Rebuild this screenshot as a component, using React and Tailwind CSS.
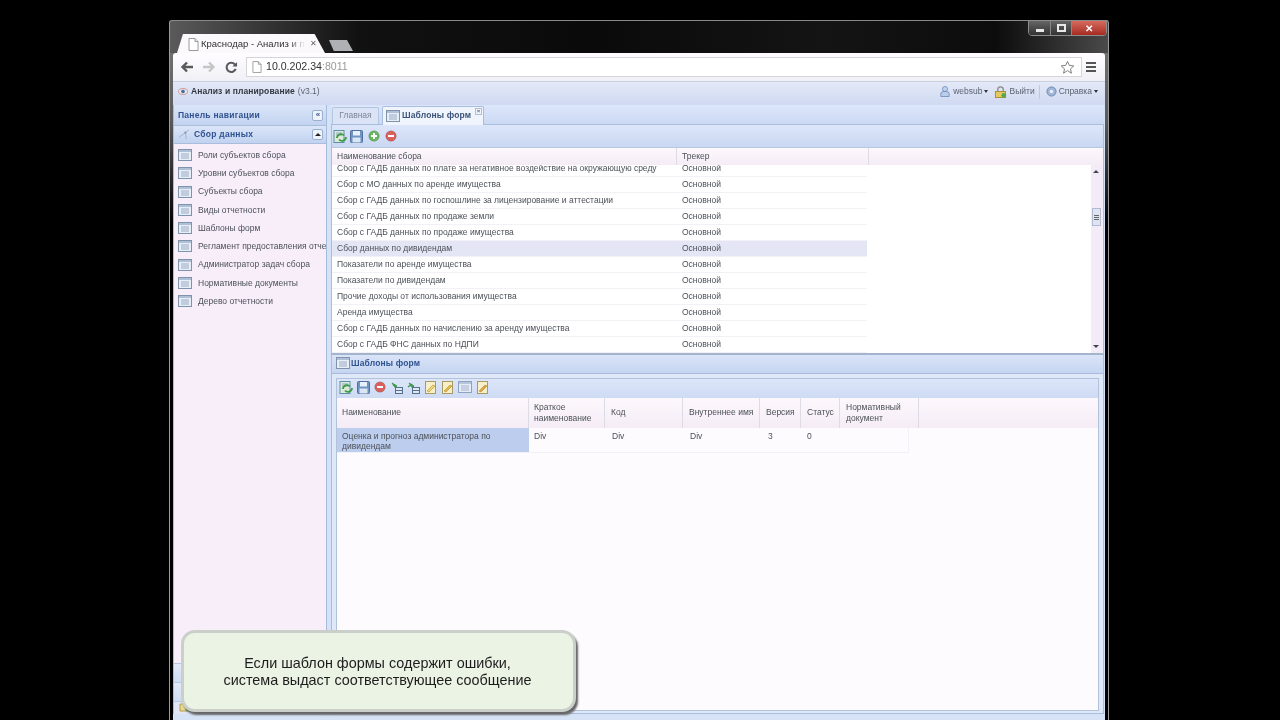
import React from "react";

const Grid = ({ className = "" }) => (
  <svg viewBox="0 0 14 12" className={"w-[14px] h-[12px] shrink-0 " + className}>
    <rect x="0.5" y="0.5" width="13" height="11" fill="#e8eef8" stroke="#7f93ad" />
    <rect x="1" y="1" width="12" height="2" fill="#aebfd6" />
    <path d="M3 5h8M3 7h8M3 9h8" stroke="#9aabc0" strokeWidth="1" />
  </svg>
);
const PageIcon = ({ cls = "w-[11px] h-[13px]" }) => (
  <svg viewBox="0 0 11 13" className={cls + " shrink-0"}>
    <path d="M1 .5h6l3 3v9H1z" fill="#fff" stroke="#9a9a9a" />
    <path d="M7 .5v3h3" fill="#e6e6e6" stroke="#9a9a9a" />
  </svg>
);
const Refresh = () => (
  <svg viewBox="0 0 14 14" className="w-[14px] h-[14px] shrink-0">
    <rect x="1" y="1.5" width="10" height="12" fill="#dcebd8" stroke="#5f8fa8" />
    <path d="M3 4h6M3 6h6" stroke="#8aa5b8" />
    <path d="M13 8a4 4 0 0 1-7 2.5M4 9a4 4 0 0 1 7-2.5" fill="none" stroke="#3f9a45" strokeWidth="1.8" />
  </svg>
);
const Save = () => (
  <svg viewBox="0 0 13 13" className="w-[13px] h-[13px] shrink-0">
    <rect x=".5" y=".5" width="12" height="12" rx="1" fill="#6f94c4" stroke="#4f70a0" />
    <rect x="3" y="1" width="7" height="4.5" fill="#e8f0fa" />
    <rect x="2.5" y="7.5" width="8" height="5" fill="#dbe6f4" />
  </svg>
);
const Dot = ({ c, plus }) => (
  <svg viewBox="0 0 12 12" className="w-[12px] h-[12px] shrink-0">
    <circle cx="6" cy="6" r="5.3" fill={c} stroke="#00000022" />
    <path d={plus ? "M3 6h6M6 3v6" : "M3 6h6"} stroke="#fff" strokeWidth="2" />
  </svg>
);
const TreeAdd = ({ flip }) => (
  <svg viewBox="0 0 13 13" className="w-[13px] h-[13px] shrink-0">
    <path d="M2 2l5 3-2 1.5z" fill="#3f9a45" stroke="#3f9a45" />
    {flip && <path d="M1 6l4-3" stroke="#3f9a45" strokeWidth="1.5" />}
    <rect x="5.5" y="6.5" width="7" height="6" fill="#dfe8f2" stroke="#55708c" />
    <path d="M5.5 9.5h7" stroke="#55708c" />
  </svg>
);
const Doc = ({ c = "#f0d878" }) => (
  <svg viewBox="0 0 13 13" className="w-[13px] h-[13px] shrink-0">
    <rect x="1.5" y=".5" width="10" height="12" fill="#f7efc9" stroke="#a79a62" />
    <path d="M3 10l6-6 2 1-6 6z" fill={c} stroke="#b98f2a" strokeWidth=".6" />
  </svg>
);
const Caret = () => <span className="inline-block ml-[2px] border-x-[2.5px] border-x-transparent border-t-[3px] border-t-[#333] align-middle" />;

const navItems = ["Роли субъектов сбора", "Уровни субъектов сбора", "Субъекты сбора", "Виды отчетности", "Шаблоны форм", "Регламент предоставления отче", "Администратор задач сбора", "Нормативные документы", "Дерево отчетности"];
const rows = ["Сбор с ГАДБ данных по плате за негативное воздействие на окружающую среду", "Сбор с МО данных по аренде имущества", "Сбор с ГАДБ данных по госпошлине за лицензирование и аттестации", "Сбор с ГАДБ данных по продаже земли", "Сбор с ГАДБ данных по продаже имущества", "Сбор данных по дивидендам", "Показатели по аренде имущества", "Показатели по дивидендам", "Прочие доходы от использования имущества", "Аренда имущества", "Сбор с ГАДБ данных по начислению за аренду имущества", "Сбор с ГАДБ ФНС данных по НДПИ"];

const hdr = "bg-gradient-to-b from-[#fdf8fd] to-[#f5ecf6] border-r border-[#dcdbe6] flex items-center leading-[11px] shrink-0";

export default function App() {
  return (
    <div className="relative w-[1280px] h-[720px] bg-black overflow-hidden font-['Liberation_Sans',sans-serif] text-[8.5px] text-[#4c5158] blur-[0.35px]">
      <div className="ml-[169px] mt-[20px] w-[940px] h-[700px] flex flex-col rounded-t-[3px] border-r border-l border-[#9a9a9a] bg-[linear-gradient(to_bottom,#7a7a7a_0px,#5a5a5a_100px,#000_206px)]">
        {/* tab strip */}
        <div className="h-[33px] flex items-end pl-[7px] shrink-0 relative bg-[linear-gradient(to_right,#5a5a5a_0%,#111_20%,#0a0a0a_45%,#141414_70%,#0c0c0c_88%,#4a4a4a_100%)] border-t border-[#8a8a8a] rounded-t-[3px]">
          <div className="w-[148px] h-[19px] pt-[1px] bg-[#fbf9fc] flex items-center pl-[11px] text-[9.5px] text-[#333] [clip-path:polygon(0_100%,4%_0,93%_0,100%_100%)]">
            <PageIcon />
            <span className="ml-[2px] w-[104px] shrink-0 overflow-hidden whitespace-nowrap [mask-image:linear-gradient(to_right,black_85%,transparent)]">Краснодар - Анализ и планирование</span>
            <span className="ml-[5px] text-[#666] text-[8px]">✕</span>
          </div>
          <div className="ml-[4px] mb-[2px] w-[24px] h-[11px] bg-[#aeb0b3] [clip-path:polygon(0_0,75%_0,100%_100%,20%_100%)]" />
          <div className="absolute right-[1px] top-[-1px] h-[16px] flex border border-[#8d8d8d] rounded-b-[4px] overflow-hidden">
            <div className="w-[22px] bg-gradient-to-b from-[#666] to-[#333] border-r border-[#888] flex items-center justify-center"><div className="w-[8px] h-[3px] mt-[4px] bg-[#e8e8e8]" /></div>
            <div className="w-[21px] bg-gradient-to-b from-[#666] to-[#333] border-r border-[#888] flex items-center justify-center"><div className="w-[9px] h-[8px] border-2 border-[#e8e8e8]" /></div>
            <div className="w-[34px] bg-gradient-to-b from-[#d66a5e] to-[#a52a22] flex items-center justify-center text-white font-bold text-[10px]">✕</div>
          </div>
        </div>
        {/* url bar */}
        <div className="h-[28px] mx-[3px] flex items-center bg-gradient-to-b from-[#fffdff] to-[#f0f0f6] rounded-t-[3px] shrink-0 pl-[7px]">
          <svg viewBox="0 0 14 12" className="w-[14px] h-[12px] shrink-0"><path d="M13 6H3M7 1.5L2.5 6 7 10.5" fill="none" stroke="#5a5a5a" strokeWidth="2.4" /></svg>
          <svg viewBox="0 0 14 12" className="w-[14px] h-[12px] ml-[8px] shrink-0"><path d="M1 6h10M7 1.5L11.5 6 7 10.5" fill="none" stroke="#c6c6c6" strokeWidth="2.4" /></svg>
          <svg viewBox="0 0 14 14" className="w-[13px] h-[13px] ml-[9px] shrink-0"><path d="M11.5 8.5A5 5 0 1 1 10.5 3.5L12 5" fill="none" stroke="#5a5a5a" strokeWidth="2.2" /><path d="M13 1v5H8z" fill="#5a5a5a" /></svg>
          <div className="ml-[8px] w-[836px] h-[20px] bg-white border border-[#d4d4da] flex items-center pl-[5px] text-[10.6px] text-[#333]">
            <PageIcon cls="w-[10px] h-[12px]" />
            <span className="ml-[4px]">10.0.202.34<span className="text-[#999]">:8011</span></span>
            <svg viewBox="0 0 16 16" className="w-[15px] h-[15px] ml-auto mr-[6px]"><path d="M8 1.5l2 4.3 4.7.5-3.5 3.2 1 4.6L8 11.3l-4.2 2.8 1-4.6L1.3 6.3 6 5.8z" fill="#fff" stroke="#777" /></svg>
          </div>
          <div className="ml-[4px] w-[10px] flex flex-col gap-[2px]"><div className="h-[2px] bg-[#555]" /><div className="h-[2px] bg-[#555]" /><div className="h-[2px] bg-[#555]" /></div>
        </div>
        {/* app header */}
        <div className="h-[24px] mx-[3px] pb-[4px] border-t border-[#c8cfdf] bg-gradient-to-b from-[#e4e9f8] to-[#cfd9f1] flex items-center pl-[5px] shrink-0">
          <svg viewBox="0 0 12 10" className="w-[10px] h-[9px] shrink-0"><ellipse cx="6" cy="5" rx="5.5" ry="3.5" fill="#e7e7ee" stroke="#c98a8a" /><circle cx="6" cy="5" r="2.2" fill="#4a6a9a" /></svg>
          <span className="ml-[3px] font-bold tracking-[0.1px] text-[#33383f]">Анализ и планирование</span>
          <span className="ml-[3px] text-[#5d6470]">(v3.1)</span>
          <div className="ml-auto flex items-center pr-[7px] text-[#5a6472]">
            <svg viewBox="0 0 12 14" className="w-[10px] h-[13px]"><circle cx="6" cy="4" r="3" fill="#c4d4ec" stroke="#6d8cb8" /><path d="M1 13V9.5a3 3 0 0 1 3-2.5h4a3 3 0 0 1 3 2.5V13z" fill="#b8cdea" stroke="#6d8cb8" /></svg>
            <span className="ml-[3px]">websub</span><Caret />
            <svg viewBox="0 0 14 13" className="w-[13px] h-[12px] ml-[6px]"><path d="M4 6V4a3 3 0 0 1 6 0v2" fill="none" stroke="#8a8a8a" strokeWidth="1.4" /><rect x="1.5" y="6" width="11" height="6.5" fill="#e8c95e" stroke="#a68b2d" /><circle cx="10.5" cy="10" r="2.5" fill="#55a84f" /></svg>
            <span className="ml-[2px]">Выйти</span>
            <div className="w-px h-[14px] bg-[#c0c9dc] ml-[4px] mr-[6px]" />
            <svg viewBox="0 0 12 12" className="w-[11px] h-[11px]"><circle cx="6" cy="6" r="5" fill="#9fb6d8" stroke="#6a86b0" /><circle cx="6" cy="6" r="2" fill="#e7eef8" /></svg>
            <span className="ml-[2px]">Справка</span><Caret />
          </div>
        </div>
        {/* body */}
        <div className="flex-1 min-h-0 mx-[3px] flex pb-[6px] bg-[#d6e2f6]">
          {/* sidebar */}
          <div className="w-[154px] shrink-0 flex flex-col border-x border-[#a6bcdc] bg-[#f8eefa]">
            <div className="h-[20px] bg-gradient-to-b from-[#dae5f8] to-[#c3d3f0] flex items-center pl-[4px] pr-[3px] font-bold tracking-[0.25px] text-[#2f5290] shrink-0">
              <span>Панель навигации</span>
              <div className="ml-auto w-[11px] h-[11px] border border-[#9ab0d0] bg-[#eef2fb] rounded-[2px] flex items-center justify-center text-[8px] leading-none text-[#3a5a8a] tracking-[-1px]">«</div>
            </div>
            <div className="h-[19px] border-y border-[#a9bedd] bg-gradient-to-b from-[#dce6f8] to-[#c1d2f0] flex items-center pl-[4px] pr-[3px] font-bold tracking-[0.25px] text-[#2f5290] shrink-0">
              <svg viewBox="0 0 14 12" className="w-[13px] h-[11px] shrink-0"><path d="M1 9L8 4l4-3M8 4l1 7" stroke="#9eb1c8" fill="none" /><circle cx="8" cy="4" r="1.2" fill="#7f9ab8" /></svg>
              <span className="ml-[3px]">Сбор данных</span>
              <div className="ml-auto w-[11px] h-[11px] border border-[#9ab0d0] bg-[#eef2fb] rounded-[2px] flex items-center justify-center"><div className="border-x-[3px] border-x-transparent border-b-[3px] border-b-[#222]" /></div>
            </div>
            <div className="flex-1 min-h-0 flex flex-col pt-[2px] overflow-hidden">
              {navItems.map((n) => (
                <div key={n} className="h-[18.25px] shrink-0 flex items-center pl-[4px] whitespace-nowrap">
                  <Grid />
                  <span className="ml-[6px]">{n}</span>
                </div>
              ))}
            </div>
            <div className="h-[19px] shrink-0 border-t border-[#b9c8e0] bg-gradient-to-b from-[#e3eaf8] to-[#cfdcf3]" />
            <div className="h-[19px] shrink-0 border-t border-[#b9c8e0] bg-gradient-to-b from-[#e3eaf8] to-[#cfdcf3]" />
            <div className="h-[13px] shrink-0 border-t border-[#b9c8e0] bg-[#dfe7f7] pl-[5px]">
              <svg viewBox="0 0 12 10" className="w-[12px] h-[10px]"><path d="M1 2h4l1 1h5v6H1z" fill="#efd98a" stroke="#b79c4a" /><circle cx="9" cy="7" r="2.5" fill="#55a84f" /></svg>
            </div>
          </div>
          {/* content */}
          <div className="flex-1 min-w-0 ml-[4px] mr-[1px] flex flex-col">
            {/* tabs */}
            <div className="h-[20px] flex items-end shrink-0 pl-[1px] border-b border-[#a9bedd] bg-gradient-to-b from-[#dde6fa] to-[#ccd9f4]">
              <div className="w-[47px] h-[17px] pb-[1px] border border-b-0 border-[#b4c6e0] bg-[#dbe4f6] flex items-center justify-center text-[#7c8694] rounded-t-[2px]">Главная</div>
              <div className="ml-[3px] w-[102px] h-[19px] pb-[1px] border border-b-0 border-[#a9bedd] bg-[#eff4fd] flex items-center pl-[3px] font-bold tracking-[0.15px] text-[#3b5278] rounded-t-[2px] -mb-px relative">
                <Grid />
                <span className="ml-[2px]">Шаблоны форм</span>
                <span className="absolute right-[1px] top-[1px] w-[7px] h-[7px] border border-[#b0bfd6] text-[6px] leading-[5px] text-center text-[#667]">×</span>
              </div>
            </div>
            {/* top grid */}
            <div className="h-[230px] shrink-0 flex flex-col border-x border-[#a9bedd] border-b-2 border-b-[#a3b4cc] bg-white">
              <div className="h-[23px] shrink-0 flex items-center pl-[1px] border-b border-[#b6c9e4] bg-gradient-to-b from-[#dde6fa] to-[#c9d7f2]">
                <Refresh /><span className="w-[3px]" /><Save /><span className="w-[5px]" /><Dot c="#67b75f" plus /><span className="w-[5px]" /><Dot c="#d9605c" />
              </div>
              <div className="h-[17px] shrink-0 flex">
                <div className={hdr + " w-[345px] pl-[5px]"}>Наименование сбора</div>
                <div className={hdr + " w-[192px] pl-[5px]"}>Трекер</div>
                <div className="flex-1 bg-gradient-to-b from-[#fdf8fd] to-[#f5ecf6]" />
              </div>
              <div className="flex-1 min-h-0 flex">
                <div className="flex-1 min-w-0 overflow-hidden">
                  <div className="-mt-[4px]">
                    {rows.map((r) => (
                      <div key={r} className={"w-[535px] h-[16px] flex items-center border-b border-[#f2f2f6] whitespace-nowrap " + (r === "Сбор данных по дивидендам" ? "bg-[#e4e6f6]" : "")}>
                        <div className="w-[345px] pl-[5px]">{r}</div>
                        <div className="pl-[5px]">Основной</div>
                      </div>
                    ))}
                  </div>
                </div>
                <div className="w-[12px] shrink-0 bg-[#f3ecf8] flex flex-col items-center justify-between py-[5px] pr-[2px] relative">
                  <div className="border-x-[3px] border-x-transparent border-b-[3px] border-b-[#444]" />
                  <div className="absolute top-[43px] left-[1px] w-[9px] h-[18px] bg-[#dfe3f2] border border-[#b0bad0] flex flex-col items-center justify-center gap-[1px]">
                    <div className="w-[5px] h-px bg-[#666]" /><div className="w-[5px] h-px bg-[#666]" /><div className="w-[5px] h-px bg-[#666]" />
                  </div>
                  <div className="border-x-[3px] border-x-transparent border-t-[3px] border-t-[#444]" />
                </div>
              </div>
            </div>
            {/* lower panel */}
            <div className="flex-1 min-h-0 flex flex-col border-x border-b border-[#a9bedd] bg-[#dfe8f8]">
              <div className="h-[19px] pb-[2px] shrink-0 flex items-center pl-[4px] font-bold tracking-[0.15px] text-[#2f5290] border-b border-[#a9bbd8] bg-gradient-to-b from-[#dae4f9] to-[#c5d5f1]">
                <Grid />
                <span className="ml-[1px]">Шаблоны форм</span>
              </div>
              <div className="flex-1 min-h-0 px-[4px] pt-[4px] pb-[2px] flex">
                <div className="flex-1 flex flex-col border border-[#b2c2da] bg-[#fdfbfe]">
                  <div className="h-[19px] pb-[3px] shrink-0 flex items-center gap-[4px] pl-[2px] bg-gradient-to-b from-[#dde6fa] to-[#cedbf4]">
                    <Refresh /><Save /><Dot c="#d9605c" /><TreeAdd /><TreeAdd flip /><Doc /><Doc c="#e2b84a" /><Grid className="opacity-80" /><Doc c="#dfa34a" />
                  </div>
                  <div className="h-[30px] shrink-0 flex">
                    <div className={hdr + " w-[192px] pl-[5px] pb-[1px]"}>Наименование</div>
                    <div className={hdr + " w-[76px] pl-[5px] pb-[1px]"}>Краткое<br />наименование</div>
                    <div className={hdr + " w-[78px] pl-[6px] pb-[1px]"}>Код</div>
                    <div className={hdr + " w-[77px] pl-[6px] pb-[1px]"}>Внутреннее имя</div>
                    <div className={hdr + " w-[41px] pl-[6px] pb-[1px]"}>Версия</div>
                    <div className={hdr + " w-[39px] pl-[6px] pb-[1px]"}>Статус</div>
                    <div className={hdr + " w-[79px] pl-[6px] pb-[1px]"}>Нормативный<br />документ</div>
                    <div className="flex-1 bg-gradient-to-b from-[#fdf8fd] to-[#f5ecf6]" />
                  </div>
                  <div className="w-[572px] h-[25px] shrink-0 flex border-b border-r border-[#f2f2f6] leading-[10px]">
                    <div className="w-[192px] bg-[#bccdee] pl-[5px] pt-[3px]">Оценка и прогноз администратора по дивидендам</div>
                    <div className="w-[76px] pl-[5px] pt-[3px]">Div</div>
                    <div className="w-[78px] pl-[7px] pt-[3px]">Div</div>
                    <div className="w-[77px] pl-[7px] pt-[3px]">Div</div>
                    <div className="w-[41px] pl-[8px] pt-[3px]">3</div>
                    <div className="w-[39px] pl-[6px] pt-[3px]">0</div>
                  </div>
                </div>
              </div>
            </div>
          </div>
        </div>
      </div>
      {/* callout */}
      <div className="absolute left-[181px] top-[630px] w-[395px] h-[82px] pr-[2px] pt-[1px] rounded-[14px] border-[3px] border-[#cbcfc9] bg-[#ebf3e4] shadow-[2px_3px_2px_#666] flex flex-col items-center justify-center text-[14.4px] leading-[16.5px] text-[#1c1c1c]">
        <div>Если шаблон формы содержит ошибки,</div>
        <div>система выдаст соответствующее сообщение</div>
      </div>
    </div>
  );
}
